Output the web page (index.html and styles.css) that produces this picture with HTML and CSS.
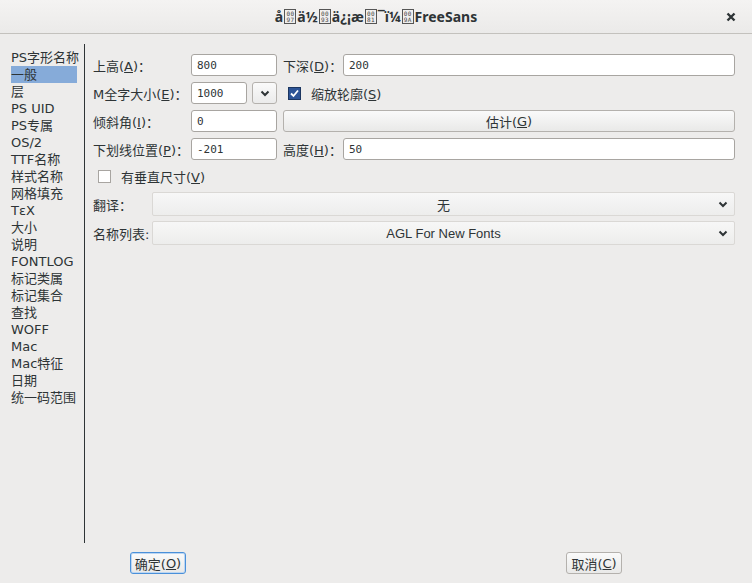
FILE: index.html
```html
<!DOCTYPE html>
<html>
<head lang="zh">
    <meta charset="UTF-8">
    <title>FreeSans</title>
    <link rel="stylesheet" href="styles.css">
</head>
<body>
<div class="window">
    <div class="titlebar">
        <div class="title">å<span class="hex"><i>0</i><i>0</i><i>9</i><i>7</i></span>ä½<span class="hex"><i>0</i><i>0</i><i>9</i><i>3</i></span>ä¿¡æ<span class="hex"><i>0</i><i>0</i><i>8</i><i>1</i></span>¯ï¼<span class="hex"><i>0</i><i>0</i><i>9</i><i>A</i></span>FreeSans</div>
        <a href="javascript:void(0)" class="close-btn">
            <svg width="10" height="10" viewBox="0 0 10 10"><path d="M1.5 1.5 L8.5 8.5 M8.5 1.5 L1.5 8.5" stroke="#2e3436" stroke-width="2.4"/></svg>
        </a>
    </div>
    <div class="main">
        <ul class="side-list">
            <li>PS字形名称</li>
            <li class="selected">一般</li>
            <li>层</li>
            <li>PS UID</li>
            <li>PS专属</li>
            <li>OS/2</li>
            <li>TTF名称</li>
            <li>样式名称</li>
            <li>网格填充</li>
            <li>TεX</li>
            <li>大小</li>
            <li>说明</li>
            <li>FONTLOG</li>
            <li>标记类属</li>
            <li>标记集合</li>
            <li>查找</li>
            <li>WOFF</li>
            <li>Mac</li>
            <li>Mac特征</li>
            <li>日期</li>
            <li>统一码范围</li>
        </ul>
        <div class="panel">
            <div class="form-grid">
                <label>上高(<u>A</u>)：</label>
                <input type="text" class="text-input" value="800">
                <label>下深(<u>D</u>)：</label>
                <input type="text" class="text-input" value="200">

                <label>M全字大小(<u>E</u>)：</label>
                <div class="combo">
                    <input type="text" class="text-input" value="1000">
                    <span class="combo-btn"><svg width="10" height="7" viewBox="0 0 10 7"><path d="M1.5 1.5 L5 5 L8.5 1.5" stroke="#2e3436" stroke-width="2" fill="none"/></svg></span>
                </div>
                <div class="check-row wide">
                    <span class="checkbox checked"><svg width="11" height="11" viewBox="0 0 11 11"><path d="M2 5.5 L4.5 8 L9 2.5" stroke="#fff" stroke-width="1.8" fill="none"/></svg></span>
                    <span>缩放轮廓(<u>S</u>)</span>
                </div>

                <label>倾斜角(<u>I</u>)：</label>
                <input type="text" class="text-input" value="0">
                <div class="push-btn wide">估计(<u>G</u>)</div>

                <label>下划线位置(<u>P</u>)：</label>
                <input type="text" class="text-input" value="-201">
                <label>高度(<u>H</u>)：</label>
                <input type="text" class="text-input" value="50">
            </div>
            <div class="check-row vert">
                <span class="checkbox"></span>
                <span>有垂直尺寸(<u>V</u>)</span>
            </div>
            <div class="select-grid">
                <label>翻译：</label>
                <div class="select-box"><span>无</span><svg width="10" height="7" viewBox="0 0 10 7"><path d="M1.5 1.5 L5 5 L8.5 1.5" stroke="#2e3436" stroke-width="2" fill="none"/></svg></div>
                <label>名称列表:</label>
                <div class="select-box"><span class="latin">AGL For New Fonts</span><svg width="10" height="7" viewBox="0 0 10 7"><path d="M1.5 1.5 L5 5 L8.5 1.5" stroke="#2e3436" stroke-width="2" fill="none"/></svg></div>
            </div>
        </div>
    </div>
    <div class="footer">
        <div class="push-btn small focused">确定(<u>O</u>)</div>
        <div class="push-btn small">取消(<u>C</u>)</div>
    </div>
</div>
</body>
</html>
```

FILE: styles.css
```css
*{
    margin: 0;
    padding: 0;
    box-sizing: border-box;
}
body{
    background: #edeceb;
    font: 13px "DejaVu Sans", "Noto Sans CJK SC", sans-serif;
    color: #2e3436;
}
.window{
    width: 752px;
    height: 583px;
    display: flex;
    flex-direction: column;
}
.titlebar{
    height: 34px;
    flex: none;
    display: flex;
    align-items: center;
    justify-content: center;
    position: relative;
    background: linear-gradient(#f4f3f2, #ebeae9);
    border-bottom: 1px solid #c3c1bd;
}
.title{
    font: bold 14px "Noto Sans", "DejaVu Sans", sans-serif;
    color: #2e3436;
    display: flex;
    align-items: center;
}
/* hex code boxes for missing glyphs */
.hex{
    display: inline-grid;
    grid-template-columns: 4px 4px;
    column-gap: 0;
    border: 1px solid #555;
    padding: 0 1px;
    margin: 0 1px;
    height: 15px;
    align-content: center;
}
.hex i{
    font: normal 6px "DejaVu Sans Mono", monospace;
    line-height: 6px;
    text-align: center;
    color: #444;
}
.close-btn{
    position: absolute;
    right: 16px;
    top: 12px;
    width: 10px;
    height: 10px;
    display: flex;
}
.main{
    margin-top: 10px;
    height: 499px;
    flex: none;
    display: flex;
}
.side-list{
    list-style: none;
    width: 85px;
    padding: 5px 7px 0 11px;
    border-right: 1px solid #2e3436;
    flex: none;
}
.side-list li{
    height: 17px;
    line-height: 17px;
    white-space: nowrap;
    color: #2e3436;
}
.side-list .selected{
    background: #86abd9;
}
.panel{
    flex: 1;
    padding: 10px 17px 0 8px;
}
.form-grid{
    display: grid;
    grid-template-columns: 92px 86px 54px 1fr;
    grid-auto-rows: 22px;
    column-gap: 6px;
    row-gap: 6px;
    align-items: center;
}
.form-grid .wide{
    grid-column: 3 / 5;
}
label{
    white-space: nowrap;
}
.text-input{
    height: 22px;
    width: 100%;
    border: 1px solid #a8a5a1;
    border-radius: 3px;
    background: #fff;
    padding-left: 5px;
    font: 11px "DejaVu Sans Mono", monospace;
    color: #2e3436;
    outline: none;
}
.combo{
    display: flex;
    gap: 5px;
    height: 22px;
}
.combo .text-input{
    width: 56px;
}
.combo-btn{
    width: 25px;
    height: 22px;
    border: 1px solid #b4b1ad;
    border-radius: 3px;
    background: linear-gradient(#fafafa, #ebebeb);
    display: flex;
    align-items: center;
    justify-content: center;
}
.check-row{
    display: flex;
    align-items: center;
    gap: 10px;
    padding-left: 5px;
}
.checkbox{
    width: 13px;
    height: 13px;
    border: 1px solid #a8a5a1;
    background: #fff;
    display: flex;
    align-items: center;
    justify-content: center;
    flex: none;
}
.checkbox.checked{
    background: #2d5496;
    border-color: #1c3660;
}
.vert{
    margin-top: 10px;
    height: 13px;
}
.push-btn{
    height: 22px;
    border: 1px solid #b4b1ad;
    border-radius: 3px;
    background: linear-gradient(#fafafa, #e9e9e8);
    display: flex;
    align-items: center;
    justify-content: center;
    white-space: nowrap;
}
.select-grid{
    margin-top: 9px;
    display: grid;
    grid-template-columns: 53px 1fr;
    column-gap: 6px;
    row-gap: 5px;
    align-items: center;
}
.select-box{
    height: 24px;
    border: 1px solid #dad8d5;
    border-radius: 2px;
    background: linear-gradient(#f7f7f7, #ededec);
    display: flex;
    align-items: center;
    position: relative;
    justify-content: center;
}
.select-box svg{
    position: absolute;
    right: 6px;
    top: 8px;
}
.select-box .latin{
    font-family: "Liberation Sans", "DejaVu Sans", sans-serif;
}
.footer{
    flex: 1;
    display: flex;
    justify-content: space-between;
    align-items: flex-start;
    padding: 9px 130px 0 130px;
}
.push-btn.small{
    width: 56px;
    height: 22px;
}
.push-btn.focused{
    border-color: #4a90d9;
    box-shadow: inset 0 0 0 1px #bcd6f2;
}
```
